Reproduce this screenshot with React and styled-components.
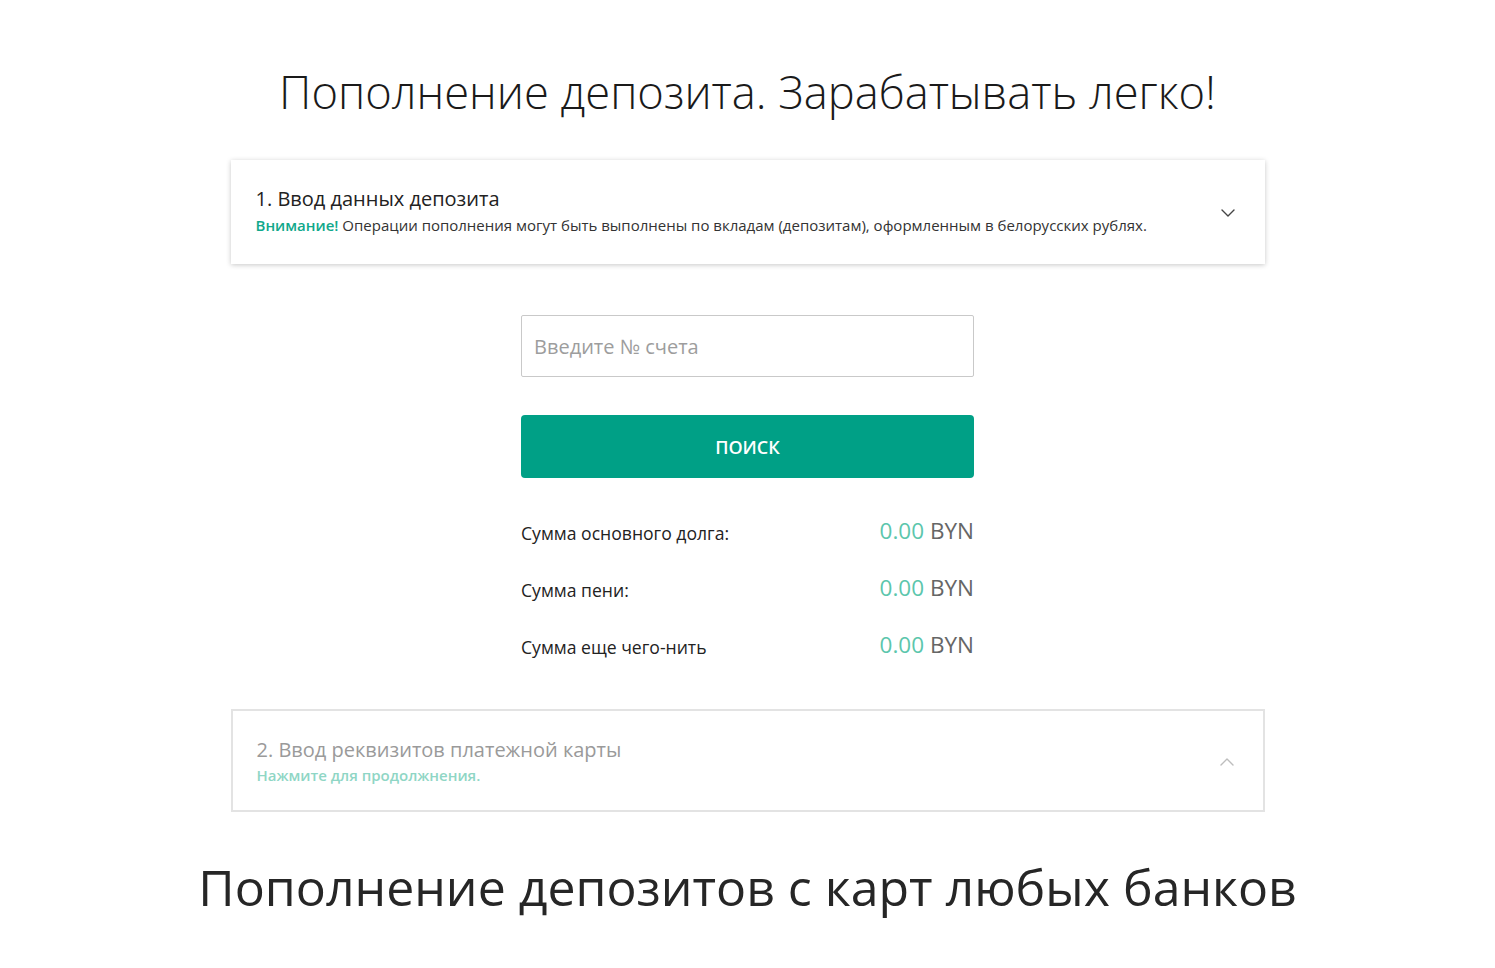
import React, { useState } from 'react';
import styled, { createGlobalStyle } from 'styled-components';

const GlobalStyle = createGlobalStyle`
  body {
    margin: 0;
    background: #fff;
    font-family: "Open Sans", "Noto Sans", sans-serif;
    color: #222;
  }
  * { box-sizing: border-box; }
`;

const Page = styled.div`
  display: flex;
  flex-direction: column;
  align-items: center;
  padding-top: 62px;
`;

const Title = styled.h1`
  margin: 0;
  font-size: 45.3px;
  font-weight: 300;
  line-height: 60px;
  color: #1a1a1a;
`;

const Card = styled.div`
  width: 1034px;
  display: flex;
  justify-content: space-between;
  align-items: flex-start;
  padding: ${p => (p.$active ? '25px 30px 0 25px' : '25px 29px 0 24px')};
  height: ${p => (p.$active ? '104px' : '103px')};
  margin-top: ${p => p.$mt}px;
  background: #fff;
  ${p => p.$active
    ? 'box-shadow: 0 1px 5px rgba(0, 0, 0, 0.22);'
    : 'border: 2px solid #e3e3e3;'}
`;

const CardText = styled.div`
  display: flex;
  flex-direction: column;
`;

const CardTitle = styled.div`
  font-size: 20px;
  line-height: 28px;
  color: ${p => (p.$muted ? '#9a9a9a' : '#222')};
`;

const CardNote = styled.div`
  font-size: 15px;
  line-height: 22px;
  color: #333;
  margin-top: 1px;

  b {
    font-weight: 600;
    color: #11a88b;
  }
`;

const MutedNote = styled.div`
  font-size: 15px;
  font-weight: 600;
  line-height: 22px;
  color: #8fd6c5;
  margin-top: 0;
`;

const Chevron = styled.div`
  margin-top: ${p => (p.$up ? '22px' : '24px')};
  color: ${p => (p.$up ? '#bdbdbd' : '#444')};
  display: flex;
`;

const Form = styled.div`
  width: 453px;
  margin-top: 51px;
  display: flex;
  flex-direction: column;
`;

const Input = styled.input`
  width: 100%;
  height: 62px;
  border: 1px solid #c9c9c9;
  border-radius: 2px;
  padding: 0 12px;
  font-family: inherit;
  font-size: 20px;
  color: #333;

  &::placeholder {
    color: #9d9d9d;
  }

  &:focus {
    outline: none;
    border-color: #00a086;
  }
`;

const Button = styled.button`
  margin-top: 38px;
  height: 63px;
  border: none;
  border-radius: 4px;
  background: #00a086;
  color: #fff;
  font-family: inherit;
  font-size: 18px;
  font-weight: 600;
  text-transform: uppercase;
  cursor: pointer;
`;

const Rows = styled.div`
  margin-top: 38px;
  display: flex;
  flex-direction: column;
  gap: 28px;
`;

const Row = styled.div`
  display: flex;
  align-items: center;
  justify-content: space-between;
  height: 29px;
`;

const Label = styled.span`
  font-size: 17.6px;
  color: #222;
  margin-top: 4px;
`;

const Amount = styled.span`
  font-size: 22.5px;
  color: #666;

  em {
    font-style: normal;
    color: #5cc6ac;
  }
`;

const Footer = styled.h2`
  margin: 41px 0 0;
  font-size: 50px;
  font-weight: 400;
  line-height: 68px;
  color: #262626;
`;

const ChevronIcon = ({ up }) => (
  <svg width="14" height="8" viewBox="0 0 14 8" fill="none">
    <path
      d={up ? 'M1 7L7 1L13 7' : 'M1 1L7 7L13 1'}
      stroke="currentColor"
      strokeWidth="1.4"
      strokeLinecap="round"
      strokeLinejoin="round"
    />
  </svg>
);

const rows = [
  { label: 'Сумма основного долга:', value: '0.00' },
  { label: 'Сумма пени:', value: '0.00' },
  { label: 'Сумма еще чего-нить', value: '0.00' },
];

const App = () => {
  const [account, setAccount] = useState('');

  return (
    <>
      <GlobalStyle />
      <Page>
        <Title>Пополнение депозита. Зарабатывать легко!</Title>

        <Card $active $mt={38}>
          <CardText>
            <CardTitle>1. Ввод данных депозита</CardTitle>
            <CardNote>
              <b>Внимание!</b> Операции пополнения могут быть выполнены по вкладам (депозитам), оформленным в белорусских рублях.
            </CardNote>
          </CardText>
          <Chevron>
            <ChevronIcon />
          </Chevron>
        </Card>

        <Form>
          <Input
            value={account}
            onChange={e => setAccount(e.target.value)}
            placeholder="Введите № счета"
          />
          <Button type="button">Поиск</Button>

          <Rows>
            {rows.map(r => (
              <Row key={r.label}>
                <Label>{r.label}</Label>
                <Amount><em>{r.value}</em> BYN</Amount>
              </Row>
            ))}
          </Rows>
        </Form>

        <Card $mt={50}>
          <CardText>
            <CardTitle $muted>2. Ввод реквизитов платежной карты</CardTitle>
            <MutedNote>Нажмите для продолжнения.</MutedNote>
          </CardText>
          <Chevron $up>
            <ChevronIcon up />
          </Chevron>
        </Card>

        <Footer>Пополнение депозитов с карт любых банков</Footer>
      </Page>
    </>
  );
};

export default App;
